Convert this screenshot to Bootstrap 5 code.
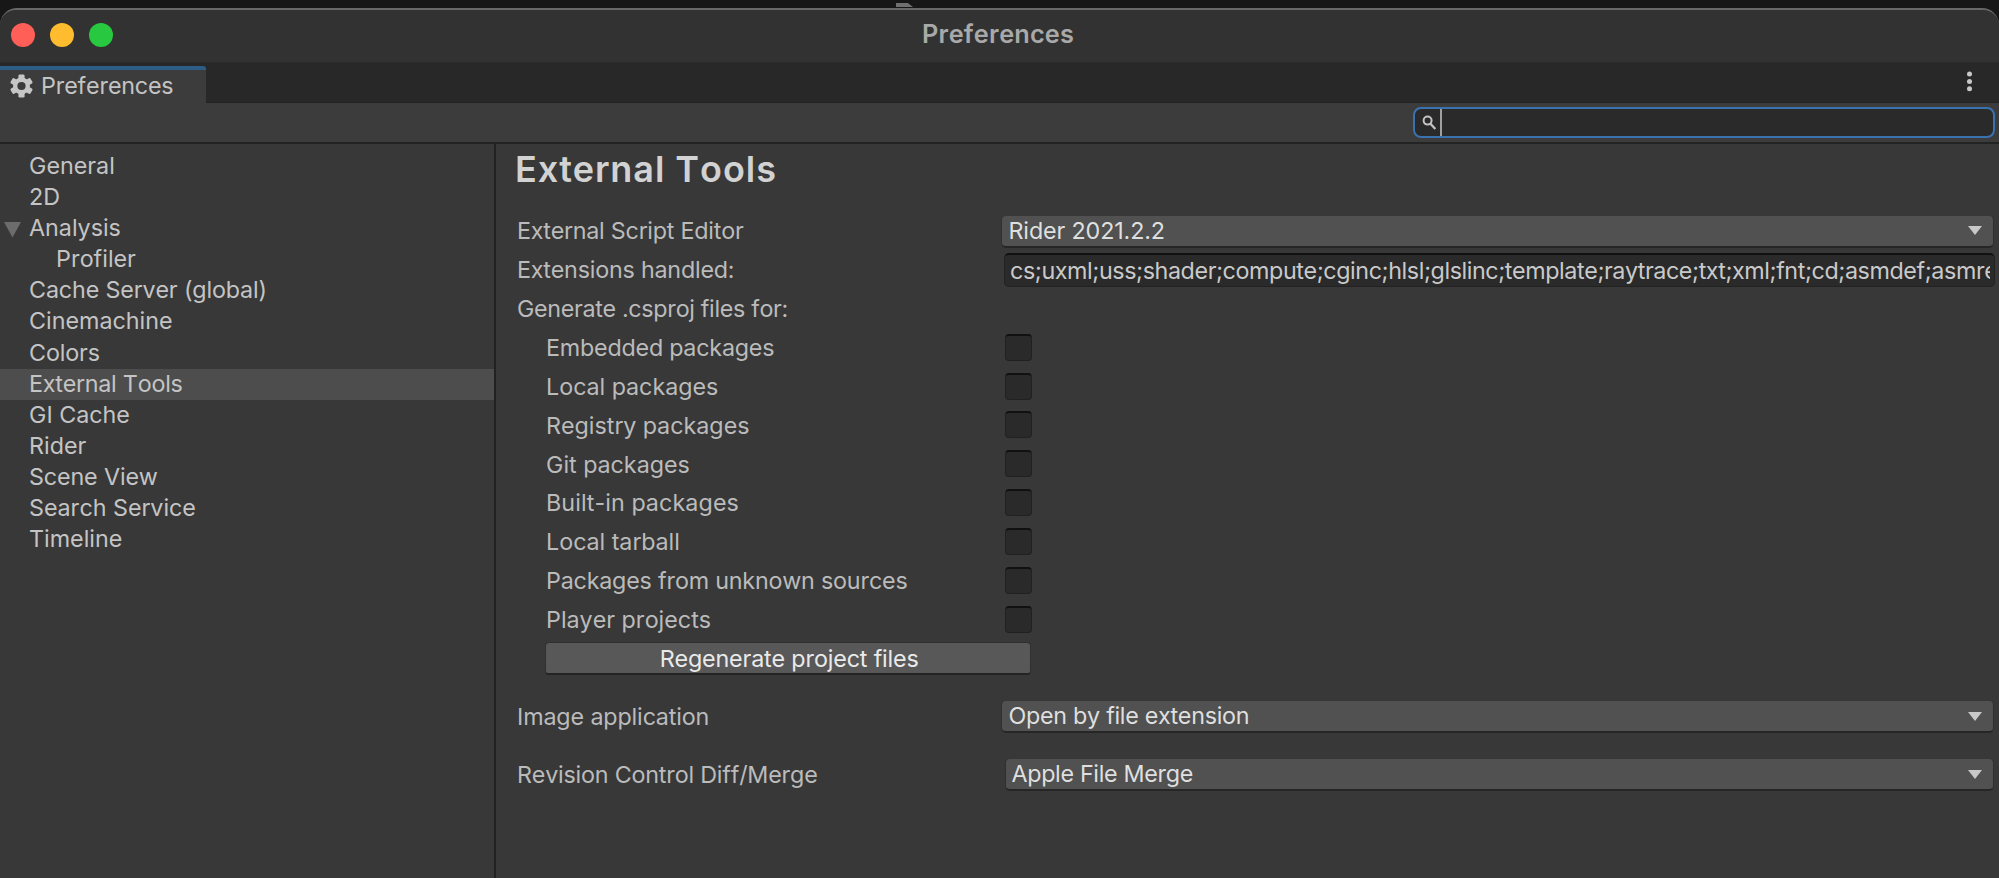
<!DOCTYPE html>
<html lang="en">
<head>
<meta charset="utf-8">
<title>Preferences</title>
<link href="https://cdn.jsdelivr.net/npm/bootstrap@5.3.0/dist/css/bootstrap.min.css" rel="stylesheet">
<style>
body{background:#171717;color:#c4c4c4;font-family:Inter,sans-serif;font-size:23.3px;line-height:31px;font-kerning:none;height:878px;overflow:hidden;padding-top:8px}
.behind{position:absolute;left:896px;top:3px;width:17px;height:4px;background:#707070;clip-path:polygon(0 0,70% 0,100% 100%,0 100%)}
.window{height:870px;background:#383838;border-top:2px solid #686868;border-radius:17px 17px 0 0;overflow:hidden}
.titlebar{height:52px;background:#323232;position:relative}
.light{width:24px;height:24px;border-radius:50%}
.light.close-dot{background:#ff5f57}
.light.min-dot{background:#febc2e}
.light.max-dot{background:#28c840}
.lights{gap:14.9px;padding-left:11.2px;padding-bottom:3px}
.win-title{position:absolute;left:922px;top:8px;font-size:25.3px;font-weight:600;letter-spacing:.17px;color:#a9a9a9}
.tabbar{height:41px;background:#282828;border-bottom:1px solid #232323;border-top:1px solid #2b2b2b;padding-right:25px}
.dots{margin-top:7px}
.tab-item{width:206px;height:38px;margin-top:3px;margin-bottom:-2px;background:#3c3c3c;border-top:4px solid #2c5d87;border-radius:0 3px 0 0;padding-left:10px;line-height:32px;z-index:1}
.toolbar{height:39px;background:#3c3c3c;padding:4px 4px 0 0}
.search{width:582px;height:31px;background:#2a2a2a;border:2px solid #3a72b0;border-radius:8px;padding-left:7px}
.caret{width:2px;height:27px;background:#a0a0a0;margin-left:3px}
.split{border-top:2px solid #232323}
.side{width:496px;border-right:2px solid #222;padding-top:7px}
.side-row{height:31.1px;line-height:29.2px;padding-left:29px}
.side-row.child{padding-left:56px}
.side-row.active{background:#4d4d4d}
.fold{position:absolute;left:4px;top:9px}
.pane{padding:0 5px 0 21px;min-width:0}
.pane-title{font-size:36px;font-weight:600;letter-spacing:.95px;color:#d2d2d2;line-height:40px;margin:4.6px 0 0 -2px;padding-bottom:23px}
.frow{height:38.88px;line-height:38.8px}
.flabel{width:484.5px;flex:none;color:#bbb;padding-top:1.3px}
.flabel.child{padding-left:29px}
.drop{height:33px;background:#515151;border:1px solid #303030;border-top-color:#373737;border-bottom:2px solid #262626;border-radius:5px;color:#dfdfdf;margin-left:-1px;padding:0 11px 0 7px;line-height:30px;letter-spacing:-.28px}
.drop.inset{margin-left:3px;margin-top:-1px;padding-left:6px}
.tfield{height:34px;margin-left:2.5px;background:#2a2a2a;border:1px solid #222;border-top:2px solid #111;border-radius:5px;padding:0 4px 0 5px;line-height:31px;letter-spacing:-.41px;color:#c9c9c9;margin-right:-1px;min-width:0}
.tfield div{overflow:hidden;white-space:nowrap}
.check{width:27px;height:27px;margin-left:3.4px;margin-top:-1px;background:#2a2a2a;border:1px solid #212121;border-top:2px solid #111;border-radius:4px}
.regen{width:486px;height:33px;margin-left:28.2px;margin-top:-1px;background:#585858;border:1px solid #303030;border-bottom:2px solid #242424;border-radius:4px;color:#eaeaea;line-height:31px;letter-spacing:-.17px;padding-left:2px}
.gap-row{height:19.3px}
.ls-s{letter-spacing:-.13px}
.ls-m{letter-spacing:-.21px}
.ls-l{letter-spacing:-.33px}
.ls-w{letter-spacing:.1px}
</style>
</head>
<body>
<div class="behind"></div>
<div class="window d-flex flex-column">
  <header class="titlebar d-flex align-items-center flex-shrink-0">
    <div class="lights d-flex">
      <span class="light close-dot"></span>
      <span class="light min-dot"></span>
      <span class="light max-dot"></span>
    </div>
    <div class="win-title">Preferences</div>
  </header>
  <nav class="tabbar d-flex justify-content-between flex-shrink-0">
    <div class="tab-item d-flex position-relative">
      <svg class="mt-1 flex-shrink-0" width="23" height="24" viewBox="-12 -12 24 24"><g fill="#c6c6c6"><circle r="8.8"/><rect x="-3.2" y="-12" width="6.4" height="24" rx="1.3"/><rect x="-3.2" y="-12" width="6.4" height="24" rx="1.3" transform="rotate(60)"/><rect x="-3.2" y="-12" width="6.4" height="24" rx="1.3" transform="rotate(120)"/></g><circle r="4.3" fill="#3c3c3c"/></svg>
      <span class="ms-2 ls-m">Preferences</span>
    </div>
    <svg class="dots" width="9" height="24" viewBox="0 0 9 24"><g fill="#c8c8c8"><circle cx="4.5" cy="4" r="2.5"/><circle cx="4.5" cy="11.4" r="2.5"/><circle cx="4.5" cy="18.8" r="2.5"/></g></svg>
  </nav>
  <div class="toolbar d-flex justify-content-end flex-shrink-0">
    <div class="search d-flex align-items-center">
      <svg width="15" height="16" viewBox="0 0 15 16" fill="none" stroke="#c2c2c2" stroke-width="2"><circle cx="5.6" cy="5.6" r="4"/><path d="M8.5 8.8 13.3 14" stroke-width="2.3"/></svg>
      <span class="caret"></span>
    </div>
  </div>
  <div class="split d-flex flex-grow-1">
    <aside class="side flex-shrink-0">
      <div class="side-row">General</div>
      <div class="side-row">2D</div>
      <div class="side-row position-relative"><svg class="fold" width="18" height="16"><path d="M0 0H17L8.5 15.5Z" fill="#6c6c6c"/></svg>Analysis</div>
      <div class="side-row child">Profiler</div>
      <div class="side-row ls-s">Cache Server (global)</div>
      <div class="side-row">Cinemachine</div>
      <div class="side-row ls-s">Colors</div>
      <div class="side-row active ls-m">External Tools</div>
      <div class="side-row">GI Cache</div>
      <div class="side-row">Rider</div>
      <div class="side-row ls-s">Scene View</div>
      <div class="side-row">Search Service</div>
      <div class="side-row">Timeline</div>
    </aside>
    <main class="pane flex-grow-1">
      <h1 class="pane-title">External Tools</h1>
      <div class="frow d-flex align-items-center"><div class="flabel ls-m">External Script Editor</div>
        <div class="drop flex-grow-1 d-flex justify-content-between align-items-center"><span class="ls-s">Rider 2021.2.2</span><svg width="14" height="9"><path d="M0 0H14L7 9Z" fill="#c8c8c8"/></svg></div></div>
      <div class="frow d-flex align-items-center"><div class="flabel ls-m">Extensions handled:</div>
        <div class="tfield flex-grow-1"><div>cs;uxml;uss;shader;compute;cginc;hlsl;glslinc;template;raytrace;txt;xml;fnt;cd;asmdef;asmref</div></div></div>
      <div class="frow d-flex align-items-center"><div class="flabel ls-l">Generate .csproj files for:</div></div>
      <div class="frow d-flex align-items-center"><div class="flabel child ls-m">Embedded packages</div><span class="check"></span></div>
      <div class="frow d-flex align-items-center"><div class="flabel child">Local packages</div><span class="check"></span></div>
      <div class="frow d-flex align-items-center"><div class="flabel child">Registry packages</div><span class="check"></span></div>
      <div class="frow d-flex align-items-center"><div class="flabel child">Git packages</div><span class="check"></span></div>
      <div class="frow d-flex align-items-center"><div class="flabel child ls-w">Built-in packages</div><span class="check"></span></div>
      <div class="frow d-flex align-items-center"><div class="flabel child">Local tarball</div><span class="check"></span></div>
      <div class="frow d-flex align-items-center"><div class="flabel child ls-m">Packages from unknown sources</div><span class="check"></span></div>
      <div class="frow d-flex align-items-center"><div class="flabel child">Player projects</div><span class="check"></span></div>
      <div class="frow d-flex align-items-center"><div class="regen text-center">Regenerate project files</div></div>
      <div class="gap-row"></div>
      <div class="frow d-flex align-items-center"><div class="flabel ls-s">Image application</div>
        <div class="drop flex-grow-1 d-flex justify-content-between align-items-center"><span>Open by file extension</span><svg width="14" height="9"><path d="M0 0H14L7 9Z" fill="#c8c8c8"/></svg></div></div>
      <div class="gap-row"></div>
      <div class="frow d-flex align-items-center"><div class="flabel ls-m">Revision Control Diff/Merge</div>
        <div class="drop inset flex-grow-1 d-flex justify-content-between align-items-center"><span class="ls-l">Apple File Merge</span><svg width="14" height="9"><path d="M0 0H14L7 9Z" fill="#c8c8c8"/></svg></div></div>
    </main>
  </div>
</div>
<script src="https://cdn.jsdelivr.net/npm/bootstrap@5.3.0/dist/js/bootstrap.bundle.min.js"></script>
</body>
</html>
